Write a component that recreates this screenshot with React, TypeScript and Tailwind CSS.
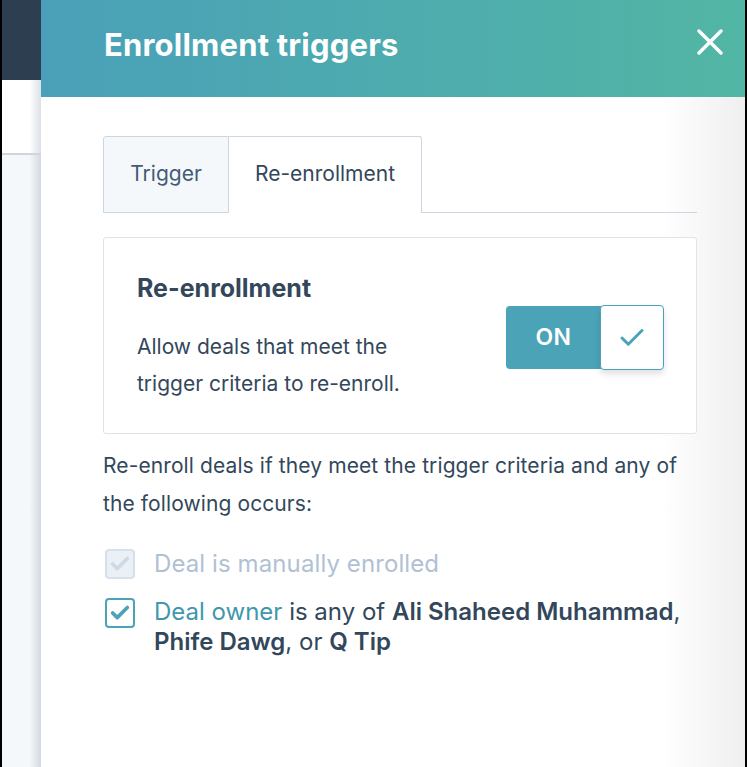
import { Check } from 'lucide-react'

function CloseIcon() {
  return (
    <svg width="26" height="26" viewBox="0 0 26 26" fill="none" stroke="white" strokeWidth="3.4" strokeLinecap="round">
      <path d="M2 2 24 24M24 2 2 24" />
    </svg>
  )
}

export default function App() {
  return (
    <div className="flex h-[767px] w-[747px] overflow-hidden bg-black font-['Inter',sans-serif] text-[#33475b]">
      {/* Page behind the panel */}
      <div className="ml-[2px] flex w-[39px] flex-col">
        <div className="h-[80px] bg-[#2d3e50]" />
        <div className="h-[75px] border-b-2 border-[#cbd6e2] bg-gradient-to-r from-white from-70% to-[#dde2e8]" />
        <div className="flex-1 bg-gradient-to-r from-[#f5f8fa] from-70% to-[#d3d9e0]" />
      </div>

      {/* Panel */}
      <div className="flex w-[704px] flex-col bg-gradient-to-r from-white from-88% to-[#efefef]">
        <header className="flex h-[97px] shrink-0 items-start justify-between bg-gradient-to-r from-[#4aa0b8] to-[#52b6a4] pl-[63px] pr-[22px] pt-[26px]">
          <h1 className="text-[31px] font-bold leading-[38px] tracking-[0.2px] text-white">Enrollment triggers</h1>
          <span className="mt-[3px]">
            <CloseIcon />
          </span>
        </header>

        <div className="flex flex-col pl-[62px] pr-[48px] pt-[39px]">
          {/* Tabs */}
          <div className="flex h-[77px]">
            <div className="flex w-[126px] items-center justify-center rounded-tl-[3px] border border-[#cbd6e2] bg-[#f5f8fa] pb-[2px] text-[21px] text-[#425b76]">
              Trigger
            </div>
            <div className="flex w-[193px] items-center justify-center rounded-tr-[3px] border-r border-t border-[#cbd6e2] bg-white pb-[2px] text-[21px] text-[#33475b]">
              Re-enrollment
            </div>
            <div className="flex-1 border-b border-[#cbd6e2]" />
          </div>

          {/* Card */}
          <div className="mt-[24px] flex items-center justify-between rounded-[3px] border border-[#dfe3eb] bg-white pb-[31px] pl-[33px] pr-[32px] pt-[35px]">
            <div>
              <h2 className="text-[25px] font-bold leading-[30px]">Re-enrollment</h2>
              <p className="mt-[25px] text-[21px] leading-[37px]">
                Allow deals that meet the
                <br />
                trigger criteria to re-enroll.
              </p>
            </div>
            <div className="flex h-[64px] items-center">
              <div className="flex h-[63px] w-[95px] items-center justify-center rounded-l-[4px] bg-[#4ba3b8] text-[23px] font-semibold tracking-[0.5px] text-white">
                ON
              </div>
              <div className="-ml-px flex h-[65px] w-[64px] items-center justify-center rounded-[4px] border-[1.5px] border-[#4ba3b8] bg-white shadow-[0_4px_6px_rgba(0,0,0,0.12)]">
                <Check size={30} strokeWidth={2.4} className="text-[#4ba3b8]" />
              </div>
            </div>
          </div>

          <p className="mt-[13px] text-[21px] leading-[38px] tracking-[0.1px]">
            Re-enroll deals if they meet the trigger criteria and any of
            <br />
            the following occurs:
          </p>

          {/* Options */}
          <div className="mt-[23px] flex items-center gap-[19px] pl-[2px]">
            <span className="flex h-[30px] w-[30px] shrink-0 items-center justify-center rounded-[4px] border-2 border-[#d6e0ea] bg-[#eaf0f6]">
              <Check size={22} strokeWidth={4} className="text-[#cfd9e4]" />
            </span>
            <span className="text-[24px] tracking-[0.1px] text-[#b0c1d4]">Deal is manually enrolled</span>
          </div>
          <div className="mt-[15px] flex items-start gap-[19px] pl-[2px]">
            <span className="mt-[1px] flex h-[30px] w-[30px] shrink-0 items-center justify-center rounded-[4px] border-2 border-[#4ba3b8] bg-white">
              <Check size={22} strokeWidth={4} className="text-[#4ba3b8]" />
            </span>
            <p className="text-[24px] leading-[30px]">
              <span className="text-[#3f98ab]">Deal owner</span> is any of{' '}
              <span className="font-semibold">Ali Shaheed Muhammad</span>,
              <br />
              <span className="font-semibold">Phife Dawg</span>, or <span className="font-semibold">Q Tip</span>
            </p>
          </div>
        </div>
      </div>
      <div className="w-[2px] bg-black" />
    </div>
  )
}
